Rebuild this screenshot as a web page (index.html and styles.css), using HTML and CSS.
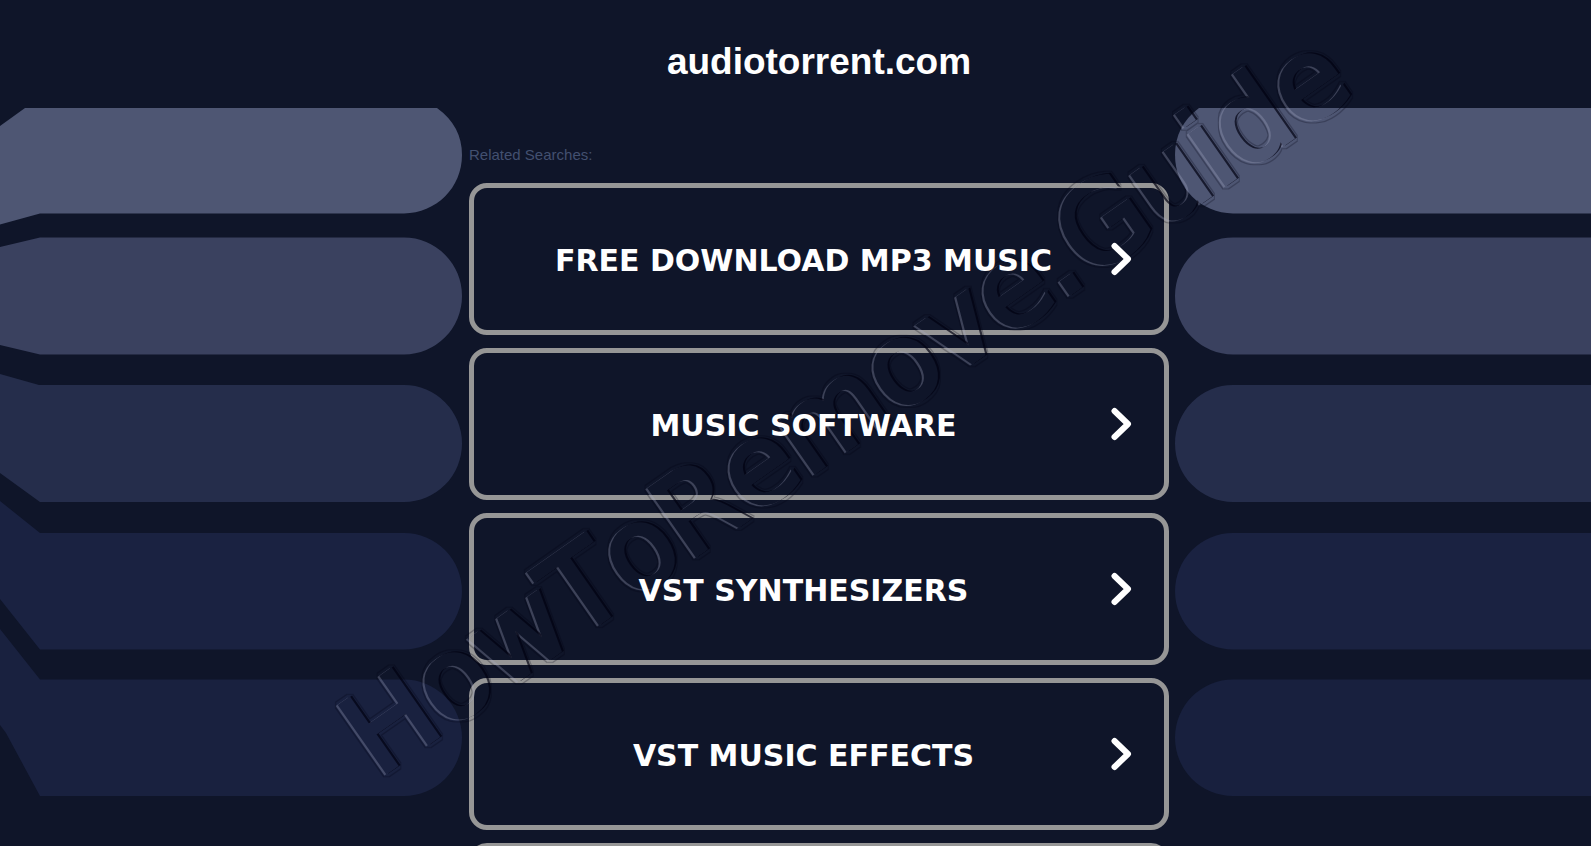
FILE: index.html
```
<!DOCTYPE html>
<html lang="en">
<head>
    <meta charset="UTF-8">
    <meta name="viewport" content="width=device-width, initial-scale=1.0">
    <title>audiotorrent.com</title>
    <link rel="stylesheet" href="styles.css">
</head>
<body>
    <div class="page">
        <header class="header">
            <h1>audiotorrent.com</h1>
        </header>

        <svg class="art art-left" viewBox="0 0 469 738" preserveAspectRatio="xMaxYMin slice" aria-hidden="true">
            <path fill="#4e5673" d="M0 18L25 0H437Q462 18 462 47C462 80 436 105 404 105.500H40L0 116.500Z"/>
            <path fill="#3a415f" d="M0 139L40 129.500H404A58 58.500 0 0 1 404 246.500H40L0 237Z"/>
            <path fill="#252d4b" d="M0 266L39 277H404A58 58.500 0 0 1 404 394H40L0 365Z"/>
            <path fill="#1a2241" d="M0 393L40 425H404A58 58.250 0 0 1 404 541.500H40L0 491Z"/>
            <path fill="#19213f" d="M0 521L40 571.500H404A58 58.250 0 0 1 404 688H40L6 625L0 617Z"/>
        </svg>

        <main class="searches">
            <p class="label">Related Searches:</p>
            <a class="item" href="#">
                <span>Free Download Mp3 Music</span>
                <svg class="chevron" viewBox="0 0 21 34" aria-hidden="true"><path d="M3.500 4L17 17L3.500 30"/></svg>
            </a>
            <a class="item" href="#">
                <span>Music Software</span>
                <svg class="chevron" viewBox="0 0 21 34" aria-hidden="true"><path d="M3.500 4L17 17L3.500 30"/></svg>
            </a>
            <a class="item" href="#">
                <span>VST Synthesizers</span>
                <svg class="chevron" viewBox="0 0 21 34" aria-hidden="true"><path d="M3.500 4L17 17L3.500 30"/></svg>
            </a>
            <a class="item" href="#">
                <span>VST Music Effects</span>
                <svg class="chevron" viewBox="0 0 21 34" aria-hidden="true"><path d="M3.500 4L17 17L3.500 30"/></svg>
            </a>
            <div class="item"></div>
        </main>

        <svg class="art art-right" viewBox="0 0 422 738" preserveAspectRatio="xMinYMin slice" aria-hidden="true">
            <path fill="#4e5673" d="M422 0H30Q6 18 6 47C6 80 32 105 64 105.500H422Z"/>
            <path fill="#3a415f" d="M422 129.500H64A58 58.500 0 0 0 64 246.500H422Z"/>
            <path fill="#252d4b" d="M422 277H64A58 58.500 0 0 0 64 394H422Z"/>
            <path fill="#1a2241" d="M422 425H64A58 58.250 0 0 0 64 541.500H422Z"/>
            <path fill="#18203e" d="M422 571.500H64A58 58.250 0 0 0 64 688H422Z"/>
        </svg>
    </div>

    <svg class="watermark" viewBox="0 0 1591 846" aria-hidden="true">
        <!-- light edge towards bottom left, dark edge towards top right -->
        <filter id="emboss" filterUnits="userSpaceOnUse" x="0" y="0" width="1591" height="846" color-interpolation-filters="sRGB">
            <feOffset in="SourceAlpha" dx="-2" dy="1" result="down"/>
            <feOffset in="SourceAlpha" dx="2" dy="-1" result="up"/>
            <feMorphology in="SourceAlpha" operator="dilate" radius="3" result="wide"/>
            <feMorphology in="SourceAlpha" operator="dilate" radius="2" result="narrow"/>
            <feFlood flood-color="#000010" flood-opacity="0.25"/>
            <feComposite in2="wide" operator="in"/>
            <feComposite in2="narrow" operator="out" result="rim"/>
            <feFlood flood-color="#a9acc8" flood-opacity="0.3"/>
            <feComposite in2="down" operator="in"/>
            <feComposite in2="SourceAlpha" operator="out" result="light"/>
            <feFlood flood-color="#000010" flood-opacity="0.7"/>
            <feComposite in2="up" operator="in"/>
            <feComposite in2="SourceAlpha" operator="out" result="dark"/>
            <feMerge>
                <feMergeNode in="rim"/>
                <feMergeNode in="light"/>
                <feMergeNode in="dark"/>
            </feMerge>
        </filter>
        <g filter="url(#emboss)">
            <text transform="translate(378 778) rotate(-35)">HowToRemove.Guide</text>
        </g>
    </svg>
</body>
</html>
```

FILE: styles.css
```
* {
    box-sizing: border-box;
}
body {
    margin: 0;
    height: 100vh;
    overflow: hidden;
    position: relative;
    background: #0f1529;
    font-family: "Liberation Sans", Arial, sans-serif;
}
.page {
    display: grid;
    grid-template-columns: minmax(0, 469fr) 700px minmax(0, 422fr);
    grid-template-rows: 108px auto;
    height: 100%;
    overflow: hidden;
}
.header {
    grid-column: 2;
    text-align: center;
    padding-top: 38px;
}
h1 {
    margin: 0;
    font-size: 37px;
    line-height: 48px;
    color: #fff;
}
.art {
    width: 100%;
    height: 738px;
}
.art-left {
    grid-column: 1;
}
.searches {
    display: flex;
    flex-direction: column;
    gap: 13px;
    padding-top: 38px;
}
.label {
    margin: 0 0 6px;
    font-size: 15px;
    line-height: 18px;
    color: #435070;
}
.item {
    display: flex;
    align-items: center;
    flex-shrink: 0;
    height: 152px;
    padding: 0 32px 0 22px;
    border: 5px solid #969696;
    border-radius: 18px;
    color: #fff;
    font-family: Verdana, "DejaVu Sans", sans-serif;
    font-size: 30px;
    font-weight: bold;
    text-transform: uppercase;
    text-decoration: none;
}
.item span {
    flex: 1;
    padding-top: 2px;
    text-align: center;
}
/* keep the labels readable above the watermark */
.item span,
.chevron {
    position: relative;
    z-index: 2;
}
.chevron {
    width: 21px;
    height: 34px;
    fill: none;
    stroke: #fff;
    stroke-width: 6;
    stroke-linecap: round;
    stroke-linejoin: round;
}
.watermark {
    position: absolute;
    top: 0;
    left: 0;
    width: 100%;
    pointer-events: none;
}
.watermark text {
    font-family: "DejaVu Sans", sans-serif;
    font-size: 111px;
    font-kerning: none;
    stroke: #000;
    stroke-width: 4px;
}
```
